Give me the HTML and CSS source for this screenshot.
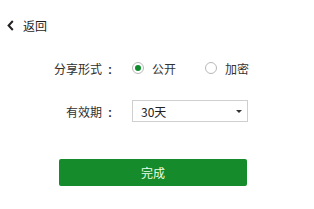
FILE: index.html
```html
<!DOCTYPE html>
<html lang="zh">
<head>
<meta charset="utf-8">
<link rel="stylesheet" href="styles.css">
</head>
<body>
<div class="page">
  <a class="back" href="#">
    <svg class="chev" width="7" height="11" viewBox="0 0 7 11"><path d="M5.8 1 L1.6 5.5 L5.8 10" fill="none" stroke="#222" stroke-width="2"/></svg>
    <span>返回</span>
  </a>
  <div class="form">
    <div class="label">分享形式<span class="colon">:</span></div>
    <div class="control radios">
      <label class="radio"><span class="dot on"></span><span>公开</span></label>
      <label class="radio"><span class="dot"></span><span>加密</span></label>
    </div>
    <div class="label">有效期<span class="colon">:</span></div>
    <div class="control">
      <div class="select"><span>30天</span><span class="caret"></span></div>
    </div>
  </div>
  <button class="done">完成</button>
</div>
</body>
</html>
```

FILE: styles.css
```css
html, body {
  margin: 0;
  padding: 0;
  background: #fff;
}
.page {
  font-family: "Noto Sans CJK SC", "Noto Sans", sans-serif;
  font-size: 12px;
  color: #333;
  display: flex;
  flex-direction: column;
  align-items: flex-start;
  padding-top: 18px;
}
.back {
  display: flex;
  align-items: center;
  gap: 9px;
  margin-left: 7px;
  height: 14px;
  color: #1e1e1e;
  text-decoration: none;
  font-size: 12px;
}
.form {
  margin-top: 25px;
  margin-left: 48px;
  display: grid;
  grid-template-columns: 64px auto;
  column-gap: 20px;
  row-gap: 21px;
  align-items: center;
}
.label {
  text-align: right;
  white-space: nowrap;
  color: #2e2e2e;
}
.colon {
  font-family: "Liberation Sans", sans-serif;
  font-weight: bold;
  margin-left: 6px;
}
.control {
  height: 22px;
  display: flex;
  align-items: center;
  white-space: nowrap;
}
.radios {
  gap: 29px;
}
.radio {
  display: flex;
  align-items: center;
  gap: 8px;
}
.dot {
  width: 10px;
  height: 10px;
  border-radius: 50%;
  border: 1px solid #b8b8b8;
  display: flex;
  align-items: center;
  justify-content: center;
  box-sizing: content-box;
}
.dot.on::after {
  content: "";
  width: 6px;
  height: 6px;
  border-radius: 50%;
  background: #0f8a2c;
}
.select {
  box-sizing: border-box;
  width: 116px;
  height: 22px;
  border: 1px solid #cfcfcf;
  display: flex;
  align-items: center;
  justify-content: space-between;
  padding: 0 5px 0 8px;
  color: #222;
}
.caret {
  width: 0;
  height: 0;
  border-left: 3px solid transparent;
  border-right: 3px solid transparent;
  border-top: 3px solid #333;
}
.done {
  margin-top: 37px;
  margin-left: 59px;
  width: 188px;
  height: 27px;
  border: none;
  border-radius: 2px;
  background: #168b2b;
  color: #e8ffe8;
  font-family: "Noto Sans CJK SC", "Noto Sans", sans-serif;
  font-size: 12px;
  padding: 0;
}
```
